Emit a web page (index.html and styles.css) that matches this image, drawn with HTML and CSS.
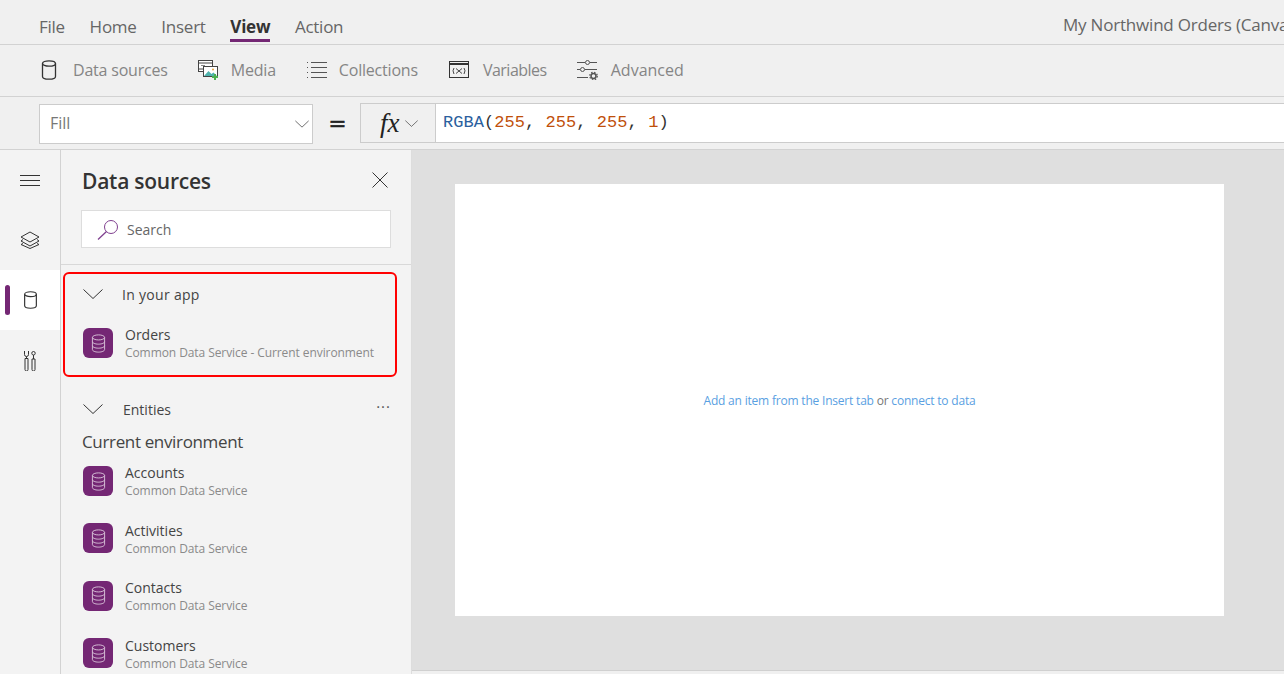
FILE: index.html
```html
<!DOCTYPE html>
<html lang="en">
<head>
    <meta charset="UTF-8">
    <meta name="viewport" content="width=device-width, initial-scale=1.0">
    <title>My Northwind Orders</title>
    <link rel="stylesheet" href="styles.css">
</head>
<body>

    <svg class="sprite" width="0" height="0">
        <symbol id="db" viewBox="0 0 16 20">
            <ellipse cx="8" cy="3.5" rx="6.5" ry="2.7"/>
            <path d="M1.5 3.5v13c0 1.5 2.9 2.7 6.5 2.7s6.500-1.200 6.500-2.700v-13"/>
        </symbol>
        <symbol id="db-stack" viewBox="0 0 16 20">
            <ellipse cx="8" cy="3.500" rx="6.500" ry="2.700"/>
            <path d="M1.500 3.500v13c0 1.500 2.900 2.700 6.500 2.700s6.500-1.200 6.500-2.700v-13M1.500 8c0 1.500 2.900 2.700 6.500 2.700s6.500-1.200 6.500-2.700M1.500 12.300c0 1.500 2.900 2.700 6.500 2.700s6.500-1.200 6.500-2.700"/>
        </symbol>
        <symbol id="chev" viewBox="0 0 20 10">
            <path d="M.5.500l9.500 9 9.500-9"/>
        </symbol>
    </svg>

    <header class="menu-bar">
        <nav class="tabs">
            <span class="tab">File</span>
            <span class="tab">Home</span>
            <span class="tab">Insert</span>
            <span class="tab active">View</span>
            <span class="tab">Action</span>
        </nav>
        <span class="app-title">My Northwind Orders (Canvas)</span>
    </header>

    <div class="toolbar">
        <div class="tool first">
            <svg class="ico line" width="16" height="20"><use href="#db"/></svg>
            <span>Data sources</span>
        </div>
        <div class="tool">
            <svg width="21" height="20" viewBox="0 0 21 20">
                <rect x=".5" y=".5" width="14" height="11" fill="#fff" stroke="#444"/>
                <path d="M.5 3h14M.5 9h14" stroke="#444" fill="none"/>
                <path d="M3 5.500h4" stroke="#888"/>
                <rect x="5.500" y="6.500" width="14" height="10" fill="#fff" stroke="#444"/>
                <path d="M6 16l4.500-5 3 3 2-1.500 3.500 3.500z" fill="#4fb3ad"/>
                <circle cx="15" cy="9.500" r="1" fill="#e8a33d"/>
                <path d="M17 14v6M14 17h6" stroke="#4cb050" stroke-width="2"/>
            </svg>
            <span>Media</span>
        </div>
        <div class="tool">
            <svg width="20" height="18" viewBox="0 0 20 18" stroke="#555" fill="none">
                <path d="M4 1.500h16M4 6.500h16M4 11.500h16M4 16.500h16"/>
                <path d="M0 1.500h2M0 6.500h2M0 11.500h2M0 16.500h2" stroke-dasharray="1 1"/>
            </svg>
            <span>Collections</span>
        </div>
        <div class="tool vars">
            <svg width="20" height="17" viewBox="0 0 20 17">
                <rect x=".5" y=".5" width="19" height="16" fill="none" stroke="#333"/>
                <path d="M0 3h20" stroke="#333" stroke-width="2"/>
                <path d="M5 7q-2 2.500 0 6M15 7q2 2.500 0 6M7 7.500l6 5M13 7.500l-6 5" fill="none" stroke="#333" stroke-width=".9"/>
            </svg>
            <span>Variables</span>
        </div>
        <div class="tool adv">
            <svg width="21" height="20" viewBox="0 0 21 20" fill="none" stroke="#555">
                <path d="M0 2.500h8M13 2.500h7M0 9.500h3M8 9.500h12M0 17.500h11"/>
                <circle cx="10.500" cy="2.500" r="2"/>
                <circle cx="5.500" cy="9.500" r="2"/>
                <circle cx="16.500" cy="16" r="2.500" stroke-width="1.500"/>
                <circle cx="16.500" cy="16" r="3.800" stroke-width="1.200" stroke-dasharray="1.500 1.500"/>
            </svg>
            <span>Advanced</span>
        </div>
    </div>

    <div class="formula-bar">
        <div class="prop-select">
            <span>Fill</span>
            <svg class="chev-sm" width="14" height="8"><use href="#chev"/></svg>
        </div>
        <span class="equals">=</span>
        <div class="fx-btn">
            <span class="fx">fx</span>
            <svg class="chev-sm" width="13" height="7"><use href="#chev"/></svg>
        </div>
        <div class="formula"><span class="fn">RGBA</span>(<span class="num">255</span>, <span class="num">255</span>, <span class="num">255</span>, <span class="num">1</span>)</div>
    </div>

    <div class="workspace">
        <aside class="rail">
            <div class="rail-btn">
                <svg width="20" height="11" viewBox="0 0 20 11" stroke="#333"><path d="M0 .500h20M0 5.500h20M0 10.500h20"/></svg>
            </div>
            <div class="rail-btn">
                <svg width="20" height="18" viewBox="0 0 20 18" fill="none" stroke="#333">
                    <path d="M10 1l9 5-9 5-9-5z"/>
                    <path d="M3 8.500l-2 1.500 9 5 9-5-2-1.500"/>
                    <path d="M3 12.500l-2 1 9 4 9-4-2-1"/>
                </svg>
            </div>
            <div class="rail-btn selected">
                <svg class="ico line" width="15" height="18"><use href="#db"/></svg>
            </div>
            <div class="rail-btn">
                <svg width="14" height="21" viewBox="0 0 14 21" fill="none" stroke="#333">
                    <path d="M1.500 1v3.500a2 2 0 0 0 4 0V1M3.500 6.500v2M2 8.500h3v11a1.500 1.500 0 0 1-3 0z"/>
                    <path d="M10.500 1.500a1.700 1.700 0 0 1 0 3.500 1.700 1.700 0 0 1 0-3.500zM10.500 5v4M9 9h3v10.500a1.500 1.500 0 0 1-3 0z"/>
                </svg>
            </div>
        </aside>

        <section class="panel">
            <div class="panel-head">
                <h2>Data sources</h2>
                <svg width="16" height="16" viewBox="0 0 16 16" stroke="#333"><path d="M.500.500l15 15M15.500.500l-15 15"/></svg>
            </div>
            <div class="search">
                <svg width="22" height="21" viewBox="0 0 22 21" fill="none" stroke="#7f3f8f">
                    <circle cx="14" cy="8" r="6.500"/>
                    <path d="M9.500 12.500L1 20.500" stroke-width="1.300"/>
                </svg>
                <span>Search</span>
            </div>
            <div class="panel-rule"></div>

            <div class="in-app">
                <div class="group-row">
                    <svg class="chev" width="20" height="10"><use href="#chev"/></svg>
                    <span class="app-label">In your app</span>
                </div>
                <div class="source">
                    <span class="source-ico"><svg width="15" height="19"><use href="#db-stack"/></svg></span>
                    <div class="source-text">
                        <div class="source-name">Orders</div>
                        <div class="source-sub">Common Data Service - Current environment</div>
                    </div>
                </div>
            </div>

            <div class="group-row entities">
                <svg class="chev" width="20" height="10"><use href="#chev"/></svg>
                <span>Entities</span>
                <span class="dots">···</span>
            </div>
            <div class="env">Current environment</div>

            <div class="source list">
                <span class="source-ico"><svg width="15" height="19"><use href="#db-stack"/></svg></span>
                <div class="source-text">
                    <div class="source-name">Accounts</div>
                    <div class="source-sub">Common Data Service</div>
                </div>
            </div>
            <div class="source list">
                <span class="source-ico"><svg width="15" height="19"><use href="#db-stack"/></svg></span>
                <div class="source-text">
                    <div class="source-name">Activities</div>
                    <div class="source-sub">Common Data Service</div>
                </div>
            </div>
            <div class="source list">
                <span class="source-ico"><svg width="15" height="19"><use href="#db-stack"/></svg></span>
                <div class="source-text">
                    <div class="source-name">Contacts</div>
                    <div class="source-sub">Common Data Service</div>
                </div>
            </div>
            <div class="source list">
                <span class="source-ico"><svg width="15" height="19"><use href="#db-stack"/></svg></span>
                <div class="source-text">
                    <div class="source-name">Customers</div>
                    <div class="source-sub">Common Data Service</div>
                </div>
            </div>
        </section>

        <main class="stage">
            <div class="stage-scroll">
                <div class="screen">
                    <p class="hint"><span class="link">Add an item from the Insert tab</span> or <span class="link">connect to data</span></p>
                </div>
            </div>
            <div class="status-bar"></div>
        </main>
    </div>

</body>
</html>
```

FILE: styles.css
```css
* {
    box-sizing: border-box;
}

body {
    margin: 0;
    display: flex;
    flex-direction: column;
    height: 674px;
    overflow: hidden;
    background-color: #f0f0f0;
    color: #333;
    font-family: "Open Sans", "Noto Sans", sans-serif;
}

.sprite {
    display: block;
    height: 0;
}

symbol {
    overflow: visible;
}

/* top menu */
.menu-bar {
    display: flex;
    flex: none;
    height: 45px;
    border-bottom: 1px solid #d2d2d2;
    white-space: nowrap;
    overflow: hidden;
}

.tabs {
    display: flex;
    flex: 0 0 1063px;
    padding-left: 39px;
}

.tab {
    height: 42px;
    padding-top: 15px;
    margin-right: 24.7px;
    font-size: 17px;
    line-height: 24px;
    letter-spacing: -.25px;
    color: #666;
}

.tab.active {
    border-bottom: 3px solid #742774;
    font-weight: 700;
    color: #333;
}

.app-title {
    padding-top: 13px;
    font-size: 17px;
    line-height: 24px;
    letter-spacing: -.2px;
    color: #666;
}

/* toolbar */
.toolbar {
    display: flex;
    flex: none;
    align-items: center;
    height: 52px;
    padding: 0 0 2px 41px;
    border-bottom: 1px solid #d2d2d2;
}

.tool {
    display: flex;
    align-items: center;
    gap: 12px;
    margin-right: 31px;
    font-size: 16px;
    letter-spacing: -.2px;
    color: #858585;
}

.tool.first {
    gap: 16px;
    margin-right: 30px;
}

.tool.vars {
    gap: 14px;
    margin-right: 30px;
    letter-spacing: -.5px;
}

.tool.adv {
    gap: 13px;
    letter-spacing: 0;
}

.ico.line {
    fill: none;
    stroke: #333;
    stroke-width: 1.3;
}

/* formula bar */
.formula-bar {
    display: flex;
    flex: none;
    height: 53px;
    padding: 6px 0 0 39px;
    border-bottom: 1px solid #d2d2d2;
}

.prop-select {
    display: flex;
    align-items: center;
    justify-content: space-between;
    width: 274px;
    height: 40px;
    margin-top: 1px;
    padding: 0 3px 3px 10px;
    border: 1px solid #ccc;
    background-color: #fff;
    font-size: 16px;
    color: #777;
}

.prop-select .chev-sm {
    margin-top: 3px;
}

.chev-sm {
    fill: none;
    stroke: #333;
}

.equals {
    width: 47px;
    padding-left: 2px;
    text-align: center;
    font-family: "DejaVu Sans", sans-serif;
    font-size: 22px;
    line-height: 42px;
    color: #222;
    -webkit-text-stroke: .3px #222;
}

.fx-btn {
    display: flex;
    align-items: center;
    gap: 5px;
    width: 76px;
    height: 40px;
    padding-left: 19px;
    border: 1px solid #ccc;
    border-right: 0;
}

.fx {
    font-family: "Liberation Serif", serif;
    font-style: italic;
    font-size: 27px;
    line-height: 32px;
    color: #222;
}

.formula {
    flex: 1;
    height: 40px;
    margin-left: -1px;
    padding-left: 7px;
    border: 1px solid #ccc;
    border-right: 0;
    background-color: #fff;
    font-family: "Liberation Mono", monospace;
    font-size: 17px;
    line-height: 38px;
    letter-spacing: .05px;
    color: #333;
    white-space: pre;
}

.fn {
    color: #2b5f9e;
}

.num {
    color: #c04f0a;
}

/* main area */
.workspace {
    display: flex;
    flex: 1;
    min-height: 0;
}

.rail {
    flex: none;
    width: 61px;
    border-right: 1px solid #d2d2d2;
    background-color: #f3f3f3;
}

.rail-btn {
    position: relative;
    display: flex;
    align-items: center;
    justify-content: center;
    width: 60px;
    height: 60px;
}

.rail-btn.selected {
    background-color: #fff;
}

.rail-btn.selected::before {
    content: "";
    position: absolute;
    left: 5px;
    top: 15px;
    width: 5px;
    height: 30px;
    border-radius: 3px;
    background-color: #742774;
}

.panel {
    flex: none;
    width: 351px;
    padding-left: 20px;
    border-right: 1px solid #ddd;
    background-color: #f3f3f3;
    overflow: hidden;
}

.panel-head {
    display: flex;
    align-items: center;
    justify-content: space-between;
    height: 60px;
    padding: 1px 23px 0 1px;
}

.panel-head h2 {
    margin: 0;
    font-size: 21px;
    font-weight: 600;
    letter-spacing: -.25px;
    color: #333;
}

.panel-head svg {
    margin-top: -1px;
}

.search {
    display: flex;
    align-items: center;
    gap: 8px;
    width: 310px;
    height: 38px;
    padding-left: 15px;
    border: 1px solid #ddd;
    background-color: #fff;
    font-size: 14px;
    color: #666;
}

.panel-rule {
    height: 1px;
    margin: 16px 0 7px -20px;
    background-color: #d8d8d8;
}

.in-app {
    width: 334px;
    height: 105px;
    margin-left: -18px;
    padding-left: 16px;
    border: 2px solid #f00;
    border-radius: 6px;
}

.group-row {
    display: flex;
    align-items: center;
    gap: 20px;
    height: 40px;
    padding-left: 2px;
    font-size: 14px;
    font-weight: 500;
    color: #444;
}

.app-label {
    margin-left: -1px;
    letter-spacing: .3px;
}

.in-app .source {
    margin-top: 14px;
}

.chev {
    flex: none;
    fill: none;
    stroke: #333;
}

.entities {
    position: relative;
    margin-top: 12px;
}

.dots {
    position: absolute;
    right: 20px;
    top: 7px;
    font-size: 15px;
    font-weight: 400;
    letter-spacing: 1px;
    color: #555;
}

.env {
    height: 24px;
    margin: 1px 0 0 1px;
    font-size: 17px;
    line-height: 24px;
    letter-spacing: -.35px;
    color: #444;
}

.source {
    display: flex;
    align-items: center;
    gap: 12px;
    height: 30px;
    margin-left: 2px;
}

.source.list {
    margin-top: 27.4px;
}

.env + .source.list {
    margin-top: 12px;
}

.source-ico {
    display: flex;
    flex: none;
    align-items: center;
    justify-content: center;
    width: 30px;
    height: 30px;
    border-radius: 6px;
    background-color: #742774;
    fill: none;
    stroke: #d9c3d9;
}

.source-text {
    padding-top: 1.8px;
}

.source-name {
    font-size: 14px;
    line-height: 18px;
    color: #444;
}

.source-sub {
    font-size: 12px;
    line-height: 17px;
    letter-spacing: -.08px;
    color: #8a8a8a;
    white-space: nowrap;
}

/* canvas */
.stage {
    display: flex;
    flex: 1;
    flex-direction: column;
    min-width: 0;
    background-color: #dfdfdf;
}

.stage-scroll {
    flex: 1;
    padding: 34px 0 0 43px;
}

.screen {
    display: flex;
    align-items: center;
    justify-content: center;
    width: 769px;
    height: 432px;
    background-color: #fff;
}

.hint {
    margin: 0;
    font-size: 12px;
    letter-spacing: -.2px;
    color: #777;
}

.link {
    color: #5a9fe2;
}

.status-bar {
    flex: none;
    height: 4px;
    border-top: 1px solid #d0d0d0;
    background-color: #f0f0f0;
}
```
